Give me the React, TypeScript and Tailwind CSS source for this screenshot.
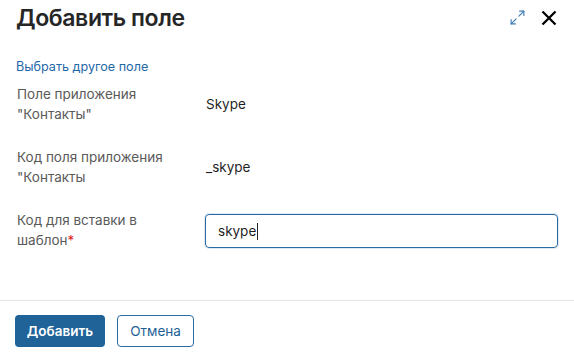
import { Maximize2 } from "lucide-react";

const rows = [
  { label: ["Поле приложения", "\"Контакты\""], value: "Skype" },
  { label: ["Код поля приложения", "\"Контакты"], value: "_skype" },
];

export default function App() {
  return (
    <div className="flex h-[357px] w-[574px] flex-col bg-white font-['Inter',sans-serif] text-[#222]">
      {/* Header */}
      <div className="flex h-[32px] items-center justify-between pl-4 pr-[17px] pt-[3px]">
        <h1 className="text-[23px] font-semibold leading-[32px] tracking-[-0.4px] text-[#262626]">
          Добавить поле
        </h1>
        <div className="flex items-center gap-[15px]">
          <Maximize2 size={17} strokeWidth={1.6} className="text-[#3d7bb5]" />
          <svg width="16" height="16" viewBox="0 0 16 16" className="text-black">
            <path d="M1.5 1.5 L14.5 14.5 M14.5 1.5 L1.5 14.5" stroke="currentColor" strokeWidth="2.3" />
          </svg>
        </div>
      </div>

      {/* Body */}
      <div className="px-4 pt-[25px]">
        <a className="block text-[12.6px] leading-[20px] text-[#1f68a8]">Выбрать другое поле</a>

        <div className="mt-[7px] flex flex-col gap-[23px]">
          {rows.map((r) => (
            <div key={r.value} className="flex items-center">
              <div className="w-[189px] pl-px text-[13.5px] leading-[20px] text-[#5a5a5a]">
                {r.label.map((l) => (
                  <div key={l}>{l}</div>
                ))}
              </div>
              <div className="pl-px text-[13.5px] text-[#1f1f1f]">{r.value}</div>
            </div>
          ))}
          <div className="flex items-center">
            <div className="w-[189px] pl-px text-[13.5px] leading-[20px] text-[#5a5a5a]">
              <div>Код для вставки в</div>
              <div>
                шаблон<span className="text-[#e02424]">*</span>
              </div>
            </div>
            <div className="mt-[2px] flex h-[34px] flex-1 items-center rounded-[4px] border border-[#2a6aa3] px-3 text-[13.5px] text-[#1f1f1f] shadow-[0_0_0_1px_rgba(42,106,163,0.15)]">
              skype<span className="ml-px inline-block h-[17px] w-px bg-[#222]" />
            </div>
          </div>
        </div>
      </div>

      <div className="flex-1" />

      {/* Footer */}
      <div className="flex gap-3 border-t border-[#e6e6e6] px-[15px] pb-[10px] pt-[14px]">
        <button className="h-[32px] w-[90px] rounded-[4px] bg-[#1f6399] text-[13.5px] font-semibold text-white">
          Добавить
        </button>
        <button className="h-[32px] w-[77px] rounded-[4px] border border-[#2a6aa3] bg-white text-[13.5px] text-[#1f5f95]">
          Отмена
        </button>
      </div>
    </div>
  );
}
